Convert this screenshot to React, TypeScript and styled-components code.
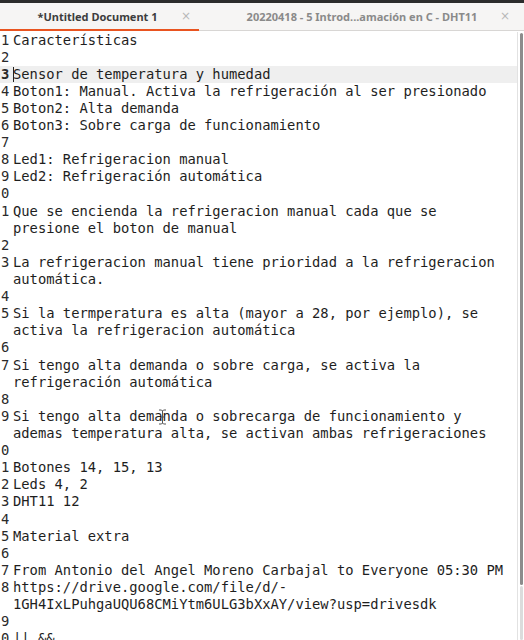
import React from "react";
import styled, { createGlobalStyle } from "styled-components";

const Global = createGlobalStyle`
  html, body { margin: 0; padding: 0; background: #ffffff; }
  body { overflow: hidden; }
`;

const Window = styled.div`
  width: 524px;
  height: 640px;
  display: flex;
  flex-direction: column;
  overflow: hidden;
  background: #ffffff;
  position: relative;
`;

const TopStrip = styled.div`
  height: 3px;
  background: #2c2c2c;
  flex: none;
`;

const TabBar = styled.div`
  height: 28px;
  flex: none;
  display: flex;
  background: #f6f5f4;
  box-sizing: border-box;
  border-bottom: 1px solid #d8d6d4;
`;

const Tab = styled.div<{ $active?: boolean; $w?: string; $pl: number; $pr: number }>`
  box-sizing: border-box;
  ${(p) => (p.$w ? `width: ${p.$w};` : "flex: 1;")}
  display: flex;
  align-items: center;
  padding: 0 ${(p) => p.$pr}px 0 ${(p) => p.$pl}px;
  margin-bottom: -1px;
  border-bottom: 2px solid ${(p) => (p.$active ? "#e95420" : "transparent")};
  font-family: "Noto Sans", "DejaVu Sans", sans-serif;
  font-weight: 700;
  font-size: 11px;
  color: ${(p) => (p.$active ? "#3d3d3d" : "#8a8a8a")};
  white-space: nowrap;
`;

const TabLabel = styled.span`
  flex: 1;
  text-align: center;
  overflow: hidden;
`;

const Close = styled.span`
  width: 12px;
  flex: none;
  text-align: center;
  font-family: "DejaVu Sans", sans-serif;
  font-weight: 400;
  font-size: 12px;
  color: #b8b8b8;
`;

const EditorArea = styled.div`
  flex: 1;
  display: flex;
  min-height: 0;
  padding-top: 0.5px;
`;

const TextPane = styled.div`
  flex: 1;
  min-width: 0;
  font-family: "DejaVu Sans Mono", monospace;
  font-size: 13.8px;
  line-height: 17.11px;
  color: #1e1e1e;
  position: relative;
`;

const Row = styled.div<{ $current?: boolean }>`
  display: grid;
  grid-template-columns: 13px 1fr;
  background: ${(p) => (p.$current ? "#efefef" : "transparent")};
`;

const Num = styled.div<{ $current?: boolean }>`
  padding-left: 1px;
  overflow: hidden;
  font-weight: ${(p) => (p.$current ? 700 : 400)};
  color: #2a2a2a;
`;

const Text = styled.div`
  white-space: pre;
  position: relative;
`;

const Caret = styled.span`
  position: absolute;
  left: 0;
  top: 1px;
  width: 1px;
  height: 15px;
  background: #222;
`;

const Scrollbar = styled.div`
  width: 7px;
  flex: none;
  box-sizing: border-box;
  border-left: 1px solid #e2e2e2;
  display: flex;
  flex-direction: column;
  padding: 1px 1px 0 2px;
`;

const Thumb = styled.div`
  height: 552px;
  background: #8c8c8c;
  border-radius: 2px;
`;

const Track = styled.div`
  flex: 1;
  background: #dcdcdc;
  margin-top: 1px;
  border-radius: 2px;
`;

const MouseCursor = styled.svg`
  position: absolute;
  left: 158px;
  top: 377px;
  pointer-events: none;
`;

type Line = string | string[];

const lines: Line[] = [
  "Características",
  "",
  "Sensor de temperatura y humedad",
  "Boton1: Manual. Activa la refrigeración al ser presionado",
  "Boton2: Alta demanda",
  "Boton3: Sobre carga de funcionamiento",
  "",
  "Led1: Refrigeracion manual",
  "Led2: Refrigeración automática",
  "",
  ["Que se encienda la refrigeracion manual cada que se", "presione el boton de manual"],
  "",
  ["La refrigeracion manual tiene prioridad a la refrigeracion", "automática."],
  "",
  ["Si la termperatura es alta (mayor a 28, por ejemplo), se", "activa la refrigeracion automática"],
  "",
  ["Si tengo alta demanda o sobre carga, se activa la", "refrigeración automática"],
  "",
  ["Si tengo alta demanda o sobrecarga de funcionamiento y", "ademas temperatura alta, se activan ambas refrigeraciones"],
  "",
  "Botones 14, 15, 13",
  "Leds 4, 2",
  "DHT11 12",
  "",
  "Material extra",
  "",
  "From Antonio del Angel Moreno Carbajal to Everyone 05:30 PM",
  ["https://drive.google.com/file/d/-", "1GH4IxLPuhgaUQU68CMiYtm6ULG3bXxAY/view?usp=drivesdk"],
  "",
  "|| &&",
];

export default function App() {
  return (
    <Window>
      <Global />
      <TopStrip />
      <TabBar>
        <Tab $active $w="199px" $pl={15} $pr={7}>
          <TabLabel>*Untitled Document 1</TabLabel>
          <Close>×</Close>
        </Tab>
        <Tab $pl={26} $pr={13}>
          <TabLabel>20220418 - 5 Introd...amación en C - DHT11</TabLabel>
          <Close>×</Close>
        </Tab>
      </TabBar>
      <EditorArea>
        <TextPane>
          {lines.map((l, i) => {
            const parts = Array.isArray(l) ? l : [l];
            const n = (i + 1) % 10;
            const current = i === 2;
            return (
              <Row key={i} $current={current}>
                <Num $current={current}>{n}</Num>
                <Text>
                  {current && <Caret />}
                  {parts.join("\n")}
                </Text>
              </Row>
            );
          })}
          <MouseCursor width="9" height="16" viewBox="0 0 9 16">
            <path d="M1 1h2.5l1 1 1-1H8M4.5 2v12M1 15h2.5l1-1 1 1H8M3 8h3" stroke="#555" strokeWidth="1" fill="none" />
          </MouseCursor>
        </TextPane>
        <Scrollbar>
          <Thumb />
          <Track />
        </Scrollbar>
      </EditorArea>
    </Window>
  );
}
